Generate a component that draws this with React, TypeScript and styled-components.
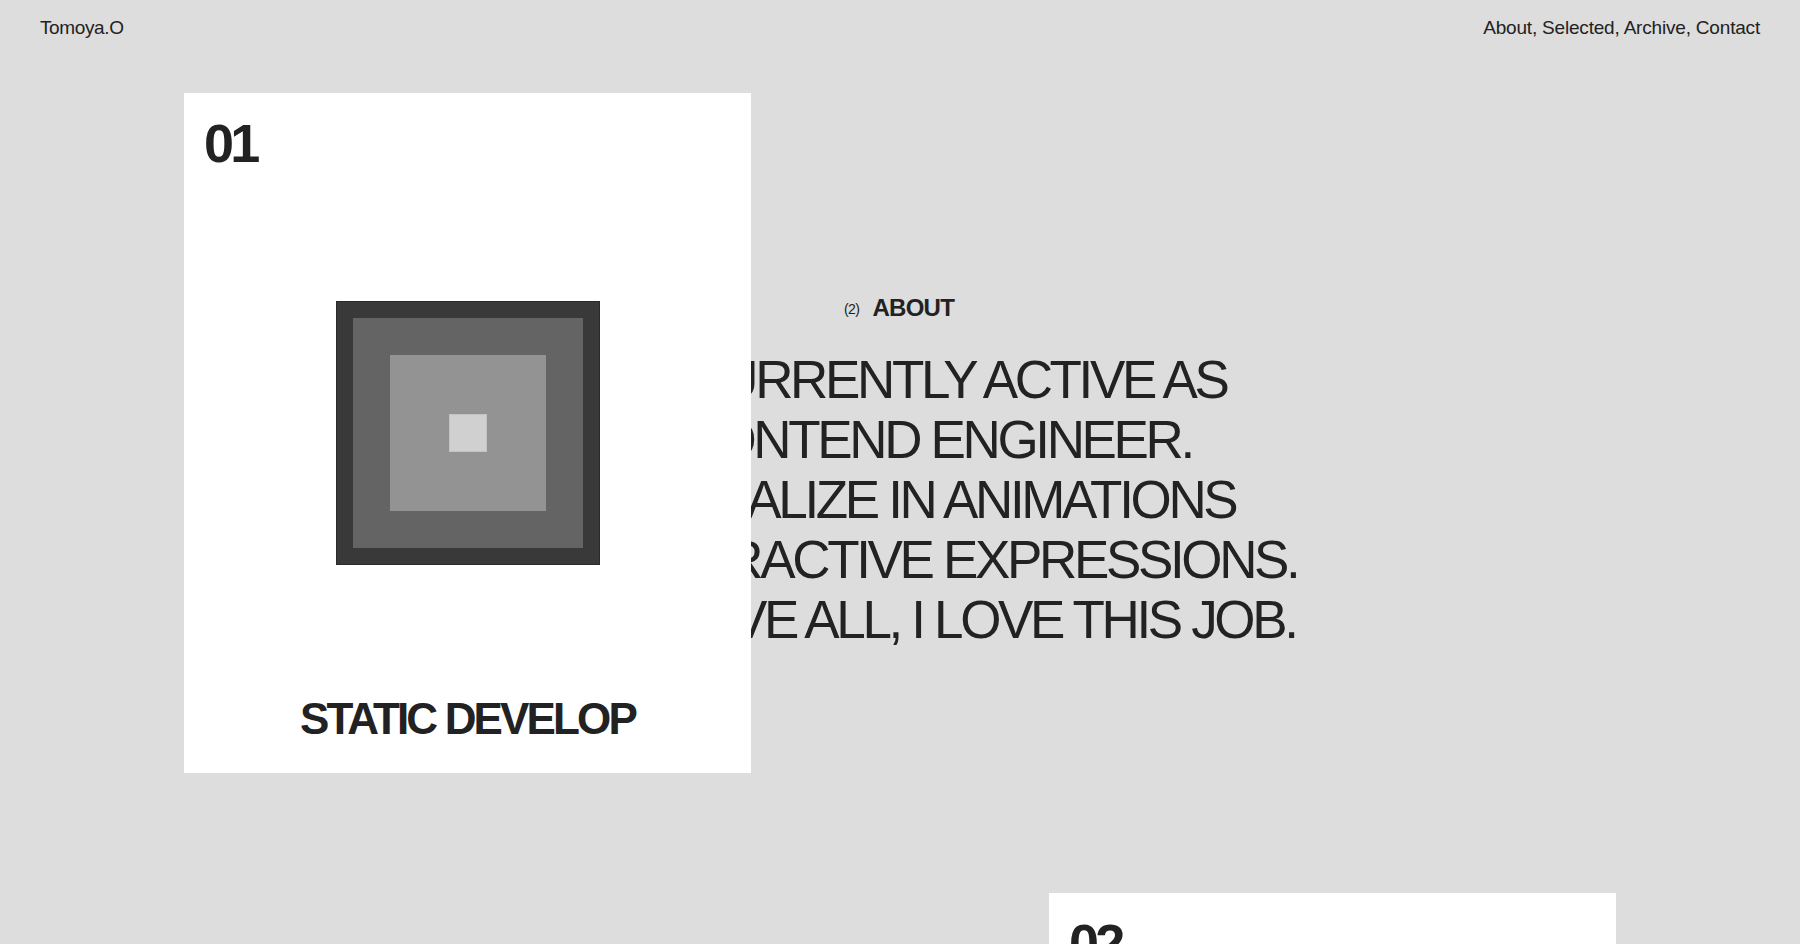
import React from "react";
import styled, { createGlobalStyle } from "styled-components";

const Global = createGlobalStyle`
  html, body {
    margin: 0;
    padding: 0;
    background: #dddddd;
    overflow: hidden;
  }
  body {
    font-family: "Liberation Sans", Arial, Helvetica, sans-serif;
    color: #222222;
    -webkit-font-smoothing: antialiased;
  }
  * { box-sizing: border-box; }
`;

const Page = styled.div`
  width: 100%;
  height: 100vh;
  overflow: hidden;
  background: #dddddd;
`;

const Header = styled.header`
  display: flex;
  justify-content: space-between;
  align-items: flex-start;
  height: 40px;
  padding: 16px 40px 0 40px;
  font-size: 19px;
  line-height: 23px;
  color: #222222;
`;

const Logo = styled.a`
  color: inherit;
  text-decoration: none;
  letter-spacing: -0.02em;
`;

const Nav = styled.nav`
  display: block;
  white-space: nowrap;
  letter-spacing: -0.01em;
  color: inherit;
`;

const NavLink = styled.a`
  color: inherit;
  text-decoration: none;
`;

const Main = styled.main`
  padding: 53px 0 0 184px;
`;

const Row = styled.section`
  display: flex;
  align-items: flex-start;
`;

const Card = styled.article<{ $shift?: number; $top?: number }>`
  position: relative;
  z-index: 1;
  flex: none;
  width: 567px;
  height: 680px;
  background: #ffffff;
  display: grid;
  grid-template-rows: 1fr auto 1fr;
  justify-items: center;
  margin-left: ${(p) => p.$shift ?? 0}px;
  margin-top: ${(p) => p.$top ?? 0}px;
`;

const CardNumber = styled.div`
  justify-self: start;
  align-self: start;
  margin: 23px 0 0 20px;
  font-size: 54px;
  line-height: 1;
  font-weight: 700;
  letter-spacing: -0.07em;
  color: #222222;
`;

const CardTitle = styled.h2`
  align-self: end;
  margin: 0 0 32px 0;
  font-size: 44px;
  line-height: 1;
  font-weight: 700;
  letter-spacing: -0.065em;
  color: #222222;
  white-space: nowrap;
`;

const Layer = styled.div<{ $size: number; $color: string; $edge: string }>`
  width: ${(p) => p.$size}px;
  height: ${(p) => p.$size}px;
  background: ${(p) => p.$color};
  border: 1px solid ${(p) => p.$edge};
  display: grid;
  place-items: center;
`;

const About = styled.section`
  padding-top: 201px;
  display: flex;
  flex-direction: column;
  align-items: flex-start;
`;

const Label = styled.div`
  display: flex;
  align-items: center;
  gap: 13px;
  margin-left: 93px;
  height: 29px;
`;

const LabelIndex = styled.span`
  font-size: 14px;
  line-height: 1;
  letter-spacing: -0.04em;
`;

const LabelTitle = styled.span`
  font-size: 24px;
  line-height: 1.2;
  font-weight: 700;
  letter-spacing: -0.03em;
`;

const Statement = styled.p`
  margin: 27px 0 0 -141px;
  font-size: 53px;
  line-height: 60px;
  font-weight: 400;
  letter-spacing: -3.35px;
  color: #222222;
  white-space: nowrap;
`;

const Line = styled.span<{ $indent: number }>`
  display: block;
  margin-left: ${(p) => p.$indent}px;
`;

const Graphic: React.FC = () => (
  <Layer $size={264} $color="#393939" $edge="#2a2a2a">
    <Layer $size={230} $color="#646464" $edge="#646464">
      <Layer $size={156} $color="#939393" $edge="#939393">
        <Layer $size={38} $color="#d0d0d0" $edge="#c4c4c4" />
      </Layer>
    </Layer>
  </Layer>
);

const lines = [
  { text: "I'M CURRENTLY ACTIVE AS", indent: 5 },
  { text: "A FRONTEND ENGINEER.", indent: 1 },
  { text: "SPECIALIZE IN ANIMATIONS", indent: -6 },
  { text: "INTERACTIVE EXPRESSIONS.", indent: 8 },
  { text: "ABOVE ALL, I LOVE THIS JOB.", indent: 20 },
];

const navItems = ["About", "Selected", "Archive", "Contact"];

export default function App() {
  return (
    <Page>
      <Global />
      <Header>
        <Logo>Tomoya.O</Logo>
        <Nav>
          {navItems.map((item, i) => (
            <React.Fragment key={item}>
              {i > 0 ? " " : null}
              <NavLink>
                {item}
                {i < navItems.length - 1 ? "," : ""}
              </NavLink>
            </React.Fragment>
          ))}
        </Nav>
      </Header>
      <Main>
        <Row>
          <Card>
            <CardNumber>01</CardNumber>
            <Graphic />
            <CardTitle>STATIC DEVELOP</CardTitle>
          </Card>
          <About>
            <Label>
              <LabelIndex>(2)</LabelIndex>
              <LabelTitle>ABOUT</LabelTitle>
            </Label>
            <Statement>
              {lines.map((l) => (
                <Line key={l.text} $indent={l.indent}>
                  {l.text}
                </Line>
              ))}
            </Statement>
          </About>
        </Row>
        <Card $shift={865} $top={120}>
          <CardNumber>02</CardNumber>
          <Graphic />
        </Card>
      </Main>
    </Page>
  );
}
